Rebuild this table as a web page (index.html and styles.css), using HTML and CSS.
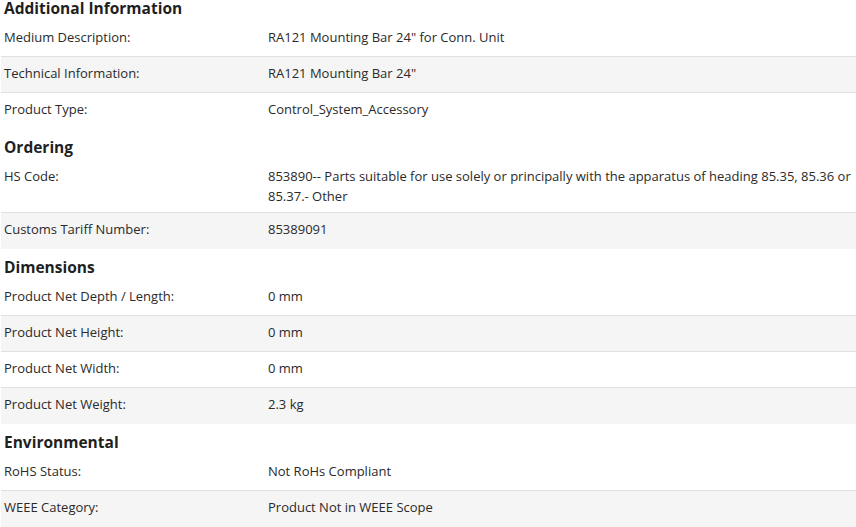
FILE: index.html
```html
<!DOCTYPE html>
<html lang="en">
<head>
<meta charset="utf-8">
<title>Product Details</title>
<link rel="stylesheet" href="styles.css">
</head>
<body>
<div class="details">
  <section class="section">
    <h2 class="sec-title">Additional Information</h2>
    <div class="row"><div class="label">Medium Description:</div><div class="value">RA121 Mounting Bar 24" for Conn. Unit</div></div>
    <div class="row"><div class="label">Technical Information:</div><div class="value">RA121 Mounting Bar 24"</div></div>
    <div class="row"><div class="label">Product Type:</div><div class="value">Control_System_Accessory</div></div>
  </section>
  <section class="section">
    <h2 class="sec-title">Ordering</h2>
    <div class="row"><div class="label">HS Code:</div><div class="value">853890-- Parts suitable for use solely or principally with the apparatus of heading 85.35, 85.36 or 85.37.- Other</div></div>
    <div class="row"><div class="label">Customs Tariff Number:</div><div class="value">85389091</div></div>
  </section>
  <section class="section">
    <h2 class="sec-title">Dimensions</h2>
    <div class="row"><div class="label">Product Net Depth / Length:</div><div class="value">0 mm</div></div>
    <div class="row"><div class="label">Product Net Height:</div><div class="value">0 mm</div></div>
    <div class="row"><div class="label">Product Net Width:</div><div class="value">0 mm</div></div>
    <div class="row"><div class="label">Product Net Weight:</div><div class="value">2.3 kg</div></div>
  </section>
  <section class="section">
    <h2 class="sec-title">Environmental</h2>
    <div class="row"><div class="label">RoHS Status:</div><div class="value">Not RoHs Compliant</div></div>
    <div class="row"><div class="label">WEEE Category:</div><div class="value">Product Not in WEEE Scope</div></div>
  </section>
</div>
</body>
</html>
```

FILE: styles.css
```css
html, body {
  margin: 0;
  padding: 0;
  background: #ffffff;
}
body {
  font-family: "Open Sans", "Liberation Sans", sans-serif;
  font-size: 13px;
  color: #2a2a2a;
}
.details {
  padding-left: 1px;
}
.sec-title {
  margin: 0;
  padding: 8px 0 3px 3px;
  font-size: 15.5px;
  line-height: 20px;
  font-weight: 700;
  color: #1f1f1f;
}
.section:first-child .sec-title {
  padding-top: 0;
  padding-bottom: 4px;
  line-height: 17px;
}
.row {
  display: grid;
  grid-template-columns: 264px 1fr;
  box-sizing: border-box;
  min-height: 36px;
  padding: 6px 0 6px 3px;
  line-height: 20px;
  border-bottom: 1px solid #e0e0e0;
}
.row:nth-of-type(even) {
  background: #f5f5f5;
}
.row:last-child {
  border-bottom: none;
}
.label, .value {
  color: #2a2a2a;
}
```
